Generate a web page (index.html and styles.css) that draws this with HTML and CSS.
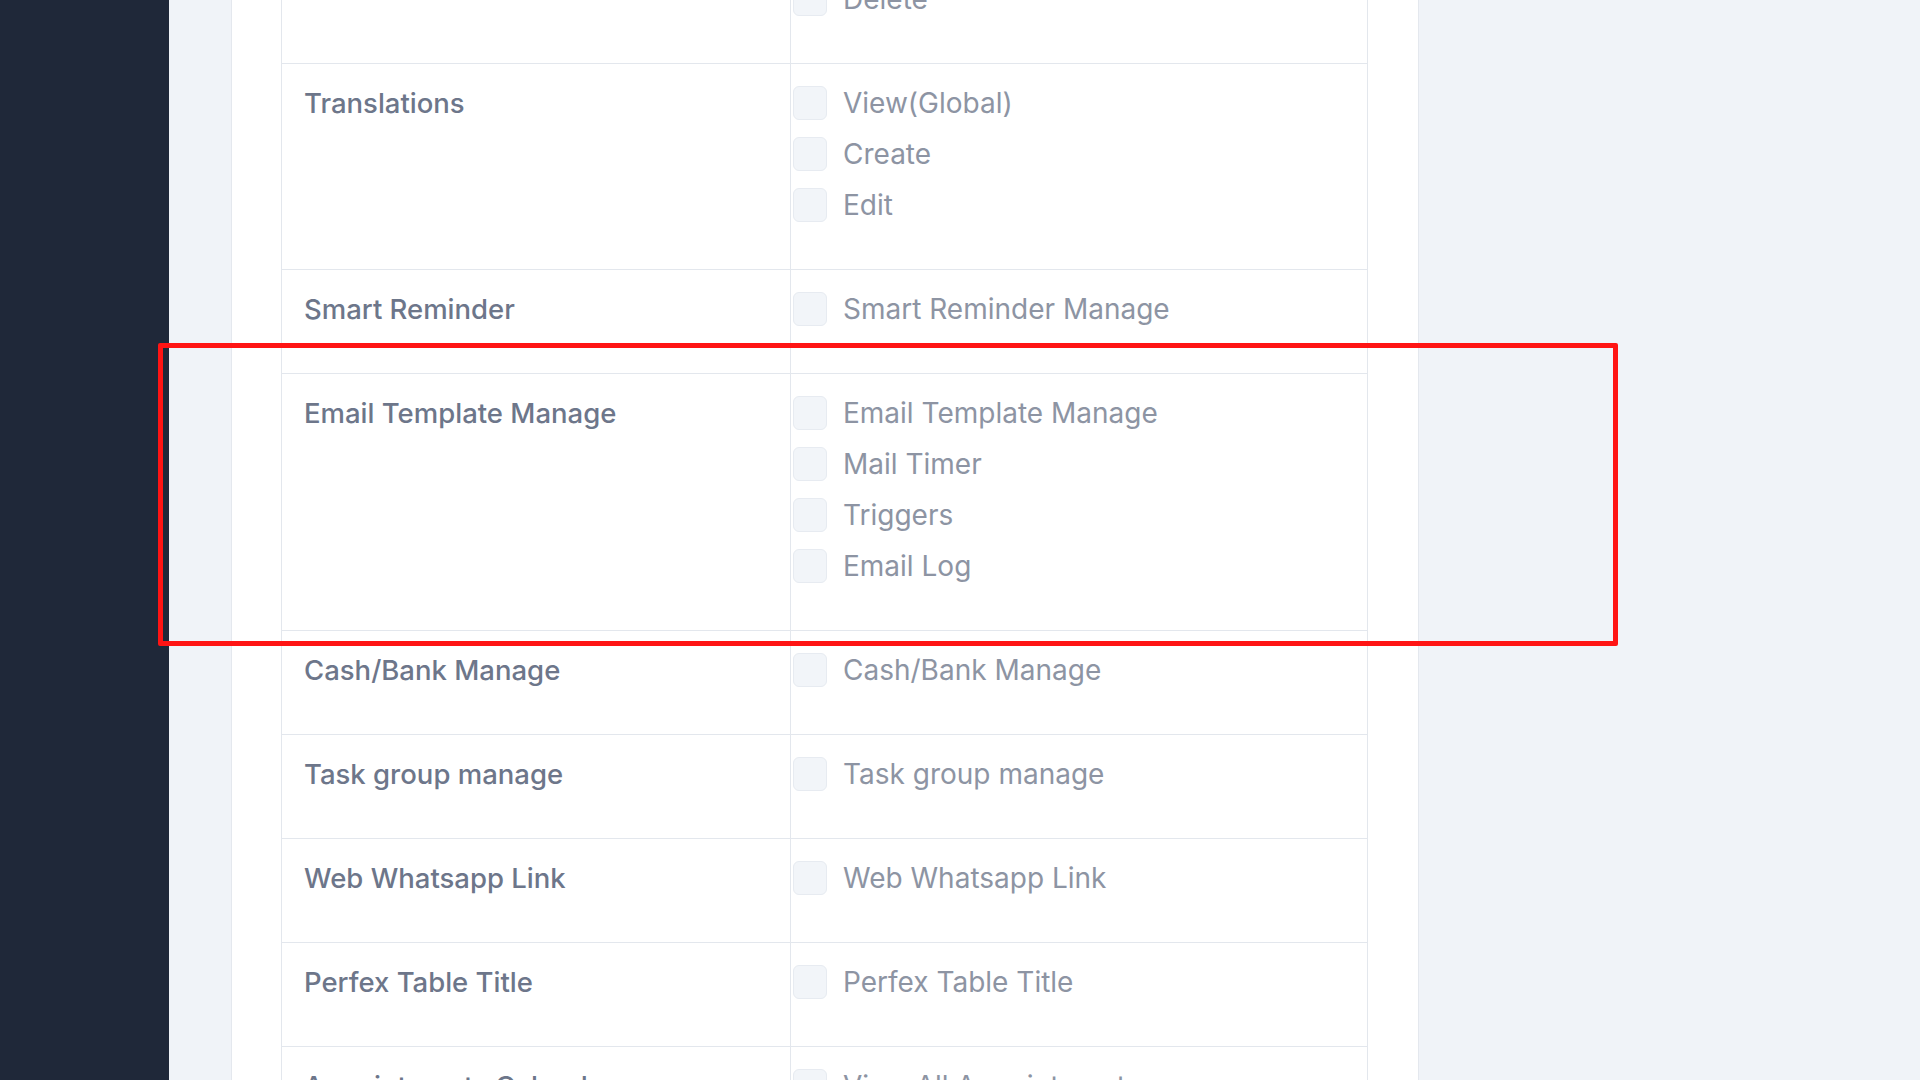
FILE: index.html
```html
<!DOCTYPE html>
<html lang="en">
<head>
    <meta charset="UTF-8">
    <meta name="viewport" content="width=device-width, initial-scale=1.0">
    <title>Role Permissions</title>
    <link rel="stylesheet" href="styles.css">
</head>
<body>
    <aside class="sidebar"></aside>

    <main class="content">
        <div class="card">
            <table class="perm-table">
                <tr>
                    <td class="perm-name">Tax Manage</td>
                    <td class="perm-list">
                        <label class="perm-item"><span class="check"></span>View(Global)</label>
                        <label class="perm-item"><span class="check"></span>Create</label>
                        <label class="perm-item"><span class="check"></span>Edit</label>
                        <label class="perm-item"><span class="check"></span>Delete</label>
                    </td>
                </tr>
                <tr>
                    <td class="perm-name">Translations</td>
                    <td class="perm-list">
                        <label class="perm-item"><span class="check"></span>View(Global)</label>
                        <label class="perm-item"><span class="check"></span>Create</label>
                        <label class="perm-item"><span class="check"></span>Edit</label>
                    </td>
                </tr>
                <tr>
                    <td class="perm-name">Smart Reminder</td>
                    <td class="perm-list">
                        <label class="perm-item"><span class="check"></span>Smart Reminder Manage</label>
                    </td>
                </tr>
                <tr>
                    <td class="perm-name">Email Template Manage</td>
                    <td class="perm-list">
                        <label class="perm-item"><span class="check"></span>Email Template Manage</label>
                        <label class="perm-item"><span class="check"></span>Mail Timer</label>
                        <label class="perm-item"><span class="check"></span>Triggers</label>
                        <label class="perm-item"><span class="check"></span>Email Log</label>
                    </td>
                </tr>
                <tr>
                    <td class="perm-name">Cash/Bank Manage</td>
                    <td class="perm-list">
                        <label class="perm-item"><span class="check"></span>Cash/Bank Manage</label>
                    </td>
                </tr>
                <tr>
                    <td class="perm-name">Task group manage</td>
                    <td class="perm-list">
                        <label class="perm-item"><span class="check"></span>Task group manage</label>
                    </td>
                </tr>
                <tr>
                    <td class="perm-name">Web Whatsapp Link</td>
                    <td class="perm-list">
                        <label class="perm-item"><span class="check"></span>Web Whatsapp Link</label>
                    </td>
                </tr>
                <tr>
                    <td class="perm-name">Perfex Table Title</td>
                    <td class="perm-list">
                        <label class="perm-item"><span class="check"></span>Perfex Table Title</label>
                    </td>
                </tr>
                <tr>
                    <td class="perm-name">Appointments Calendar</td>
                    <td class="perm-list">
                        <label class="perm-item"><span class="check"></span>View All Appointments</label>
                    </td>
                </tr>
            </table>
        </div>
    </main>

    <div class="highlight"></div>
</body>
</html>
```

FILE: styles.css
```css
* {
    box-sizing: border-box;
}

html, body {
    height: 100%;
}

body {
    margin: 0;
    display: flex;
    overflow: hidden;
    font-family: Inter, "Noto Sans", sans-serif;
    background-color: #f0f3f8;
}

.sidebar {
    flex: none;
    width: 169px;
    background-color: #1f2839;
}

.content {
    flex: none;
    padding-left: 62px;
}

.card {
    width: 1188px;
    height: 100vh;
    overflow: hidden;
    padding: 0 49px;
    background-color: #fff;
    border-left: 1px solid #e4e8ee;
    border-right: 1px solid #e4e8ee;
}

.perm-table {
    width: 1087px;
    margin-top: -194px;
    border-collapse: collapse;
}

.perm-table td {
    vertical-align: top;
    border: 1px solid #e3e7ed;
    padding: 22px 0 47px;
}

.perm-name {
    width: 509px;
    padding-left: 22px !important;
    font-size: 27.5px;
    line-height: 34px;
    font-weight: 500;
    color: #6d768a;
}

.perm-list {
    padding-left: 2px !important;
}

.perm-item {
    display: flex;
    align-items: center;
    gap: 16px;
    height: 34px;
    margin-bottom: 17px;
    font-size: 28px;
    color: #8d94a3;
}

.perm-item:last-child {
    margin-bottom: 0;
}

.check {
    flex: none;
    width: 34px;
    height: 34px;
    border-radius: 6px;
    background-color: #f2f5f9;
    border: 1px solid #e7ebf1;
}

/* annotation frame drawn over the screenshot */
.highlight {
    position: absolute;
    left: 158px;
    top: 343px;
    width: 1460px;
    height: 303px;
    border: 5px solid #ff1414;
    border-radius: 2px;
}
```
